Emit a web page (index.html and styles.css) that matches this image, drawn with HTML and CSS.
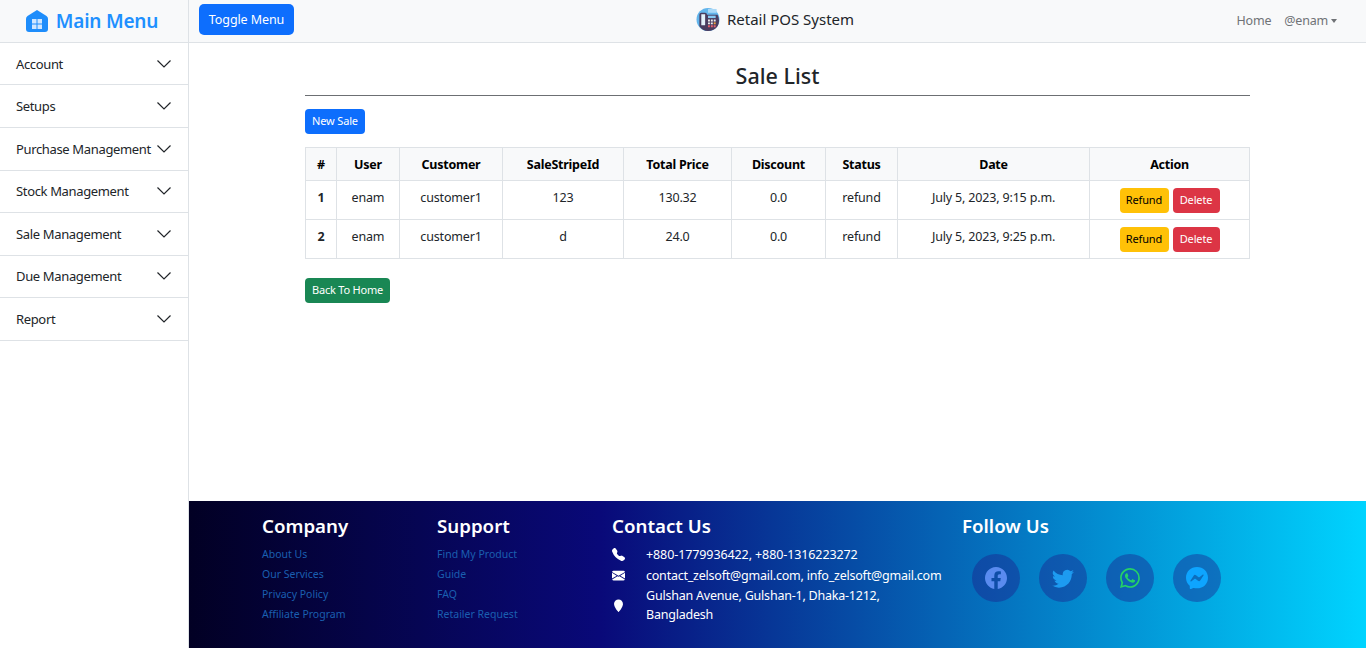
FILE: index.html
```html
<!DOCTYPE html>
<html>

	<head>
		<meta charset="UTF-8">
		<title>Sale List</title>
		<link rel="stylesheet" href="styles.css">
	</head>

	<body>
		<aside class="sidebar">
			<div class="brand">
				<svg class="brand-icon" viewBox="0 0 22 22">
					<path fill="#1e8dfb" d="M11 0 20.500 6Q22 7 22 9V19Q22 22 19 22H3Q0 22 0 19V9Q0 7 1.500 6Z" />
					<path fill="#cfe6ff" d="M6 9h4.500v4.500H6zM11.500 9H16v4.500h-4.500zM6 14.500h4.500V19H6zM11.500 14.500H16V19h-4.500z" />
				</svg>
				<span>Main Menu</span>
			</div>
			<ul class="menu">
				<li>Account<svg viewBox="0 0 16 16"><path d="M1.500 4.500 8 11l6.500-6.500" /></svg></li>
				<li>Setups<svg viewBox="0 0 16 16"><path d="M1.500 4.500 8 11l6.500-6.500" /></svg></li>
				<li>Purchase Management<svg viewBox="0 0 16 16"><path d="M1.500 4.500 8 11l6.500-6.500" /></svg></li>
				<li>Stock Management<svg viewBox="0 0 16 16"><path d="M1.500 4.500 8 11l6.500-6.500" /></svg></li>
				<li>Sale Management<svg viewBox="0 0 16 16"><path d="M1.500 4.500 8 11l6.500-6.500" /></svg></li>
				<li>Due Management<svg viewBox="0 0 16 16"><path d="M1.500 4.500 8 11l6.500-6.500" /></svg></li>
				<li>Report<svg viewBox="0 0 16 16"><path d="M1.500 4.500 8 11l6.500-6.500" /></svg></li>
			</ul>
		</aside>

		<div class="main">
			<nav class="navbar">
				<a class="btn btn-toggle" href="#">Toggle Menu</a>
				<div class="nav-title">
					<svg class="pos-icon" viewBox="0 0 24 24">
						<circle cx="12" cy="12" r="12" fill="#62b5ec" />
						<path fill="#a9d8f7" d="M12 1h9v4h-9z" />
						<path fill="#4a3d60" d="M3 19V7c0-1 1-2 2-2h4c1 0 2 1 2 2h11c2 4 2 9 0 12-2 3-6 5-10 5s-7-2-9-5z" />
						<path fill="#e3f1fb" d="M5 6.500h4V18H5z" />
						<path fill="#86c9f2" d="M12 8h8v2.500h-8z" />
						<path fill="#eeeeee" d="M12 12h2v2h-2zM15 12h2v2h-2zM18 12h2v2h-2zM12 15h2v2h-2zM15 15h2v2h-2z" />
						<path fill="#f0a23c" d="M18 15h2v2h-2z" />
						<path fill="#e4606d" d="M12 18h2v2h-2zM15 18h2v2h-2zM18 18h2v2h-2z" />
					</svg>
					<span>Retail POS System</span>
				</div>
				<div class="nav-links">
					<a href="#">Home</a>
					<a class="dropdown" href="#">@enam</a>
				</div>
			</nav>

			<div class="content">
				<h2>Sale List</h2>
				<div class="rule"></div>
				<a class="btn btn-sm btn-primary" href="#">New Sale</a>
				<table class="sale-table">
					<thead>
						<tr>
							<th>#</th>
							<th>User</th>
							<th>Customer</th>
							<th>SaleStripeId</th>
							<th>Total Price</th>
							<th>Discount</th>
							<th>Status</th>
							<th>Date</th>
							<th>Action</th>
						</tr>
					</thead>
					<tbody>
						<tr>
							<th>1</th>
							<td>enam</td>
							<td>customer1</td>
							<td>123</td>
							<td>130.32</td>
							<td>0.0</td>
							<td>refund</td>
							<td>July 5, 2023, 9:15 p.m.</td>
							<td class="actions"><a class="btn btn-sm btn-warning" href="#">Refund</a><a class="btn btn-sm btn-danger" href="#">Delete</a></td>
						</tr>
						<tr>
							<th>2</th>
							<td>enam</td>
							<td>customer1</td>
							<td>d</td>
							<td>24.0</td>
							<td>0.0</td>
							<td>refund</td>
							<td>July 5, 2023, 9:25 p.m.</td>
							<td class="actions"><a class="btn btn-sm btn-warning" href="#">Refund</a><a class="btn btn-sm btn-danger" href="#">Delete</a></td>
						</tr>
					</tbody>
				</table>
				<a class="btn btn-sm btn-success" href="#">Back To Home</a>
			</div>

			<footer class="footer">
				<div class="col">
					<h4>Company</h4>
					<ul>
						<li><a href="#">About Us</a></li>
						<li><a href="#">Our Services</a></li>
						<li><a href="#">Privacy Policy</a></li>
						<li><a href="#">Affiliate Program</a></li>
					</ul>
				</div>
				<div class="col">
					<h4>Support</h4>
					<ul>
						<li><a href="#">Find My Product</a></li>
						<li><a href="#">Guide</a></li>
						<li><a href="#">FAQ</a></li>
						<li><a href="#">Retailer Request</a></li>
					</ul>
				</div>
				<div class="col col-wide">
					<h4>Contact Us</h4>
					<div class="contact contact-phone">
						<svg viewBox="0 0 16 16"><path d="M1.885.511a1.745 1.745 0 0 1 2.61.163L6.290 2.980c.329.423.445.974.315 1.494l-.547 2.190a.678.678 0 0 0 .178.643l2.457 2.457a.678.678 0 0 0 .644.178l2.189-.547a1.745 1.745 0 0 1 1.494.315l2.306 1.794c.829.645.905 1.870.163 2.611l-1.034 1.034c-.74.74-1.846 1.065-2.877.702a18.634 18.634 0 0 1-7.010-4.420 18.634 18.634 0 0 1-4.420-7.009c-.362-1.030-.037-2.137.703-2.877L1.885.511z" /></svg>
						<span>+880-1779936422, +880-1316223272</span>
					</div>
					<div class="contact">
						<svg viewBox="0 0 16 16"><path d="M.05 3.555A2 2 0 0 1 2 2h12a2 2 0 0 1 1.950 1.555L8 8.414.05 3.555zM0 4.697v7.104l5.803-3.558L0 4.697zM6.761 8.830l-6.570 4.027A2 2 0 0 0 2 14h12a2 2 0 0 0 1.808-1.144l-6.570-4.027L8 9.586l-1.239-.756zm3.436-.586L16 11.801V4.697l-5.803 3.547z" /></svg>
						<span>contact_zelsoft@gmail.com, info_zelsoft@gmail.com</span>
					</div>
					<div class="contact">
						<svg viewBox="0 0 16 16"><path d="M8 16s5.500-5.686 5.500-10a5.500 5.500 0 0 0-11 0c0 4.314 5.500 10 5.500 10z" /></svg>
						<span>Gulshan Avenue, Gulshan-1, Dhaka-1212,<br>Bangladesh</span>
					</div>
				</div>
				<div class="col col-wide">
					<h4>Follow Us</h4>
					<div class="social">
						<a href="#"><svg class="fb" viewBox="0 0 16 16"><path d="M16 8.049c0-4.446-3.582-8.050-8-8.050C3.580 0-.002 3.603-.002 8.050c0 4.017 2.926 7.347 6.750 7.951v-5.625h-2.030V8.050H6.750V6.275c0-2.017 1.195-3.131 3.022-3.131.876 0 1.791.157 1.791.157v1.980h-1.009c-.993 0-1.303.621-1.303 1.258v1.510h2.218l-.354 2.326H9.250V16c3.824-.604 6.750-3.934 6.750-7.951z" /></svg></a>
						<a href="#"><svg class="tw" viewBox="0 0 16 16"><path d="M5.026 15c6.038 0 9.341-5.003 9.341-9.334 0-.14 0-.282-.006-.422A6.685 6.685 0 0 0 16 3.542a6.658 6.658 0 0 1-1.889.518 3.301 3.301 0 0 0 1.447-1.817 6.533 6.533 0 0 1-2.087.793A3.286 3.286 0 0 0 7.875 6.030a9.325 9.325 0 0 1-6.767-3.429 3.289 3.289 0 0 0 1.018 4.382A3.323 3.323 0 0 1 .64 6.575v.045a3.288 3.288 0 0 0 2.632 3.218 3.203 3.203 0 0 1-.865.115 3.230 3.230 0 0 1-.614-.057 3.283 3.283 0 0 0 3.067 2.277A6.588 6.588 0 0 1 .78 13.580a6.320 6.320 0 0 1-.78-.045A9.344 9.344 0 0 0 5.026 15z" /></svg></a>
						<a href="#"><svg class="wa" viewBox="0 0 16 16"><path d="M13.601 2.326A7.854 7.854 0 0 0 7.994 0C3.627 0 .068 3.558.064 7.926c0 1.399.366 2.760 1.057 3.965L0 16l4.204-1.102a7.933 7.933 0 0 0 3.790.965h.004c4.368 0 7.926-3.558 7.930-7.930A7.898 7.898 0 0 0 13.600 2.326zM7.994 14.521a6.573 6.573 0 0 1-3.356-.920l-.24-.144-2.494.654.666-2.433-.156-.251a6.560 6.560 0 0 1-1.007-3.505c0-3.626 2.957-6.584 6.591-6.584a6.560 6.560 0 0 1 4.660 1.931 6.557 6.557 0 0 1 1.928 4.660c-.004 3.639-2.961 6.592-6.592 6.592zm3.615-4.934c-.197-.099-1.170-.578-1.353-.646-.182-.065-.315-.099-.445.099-.133.197-.513.646-.627.775-.114.133-.232.148-.43.050-.197-.1-.836-.308-1.592-.985-.59-.525-.985-1.175-1.103-1.372-.114-.198-.011-.304.088-.403.087-.088.197-.232.296-.346.1-.114.133-.198.198-.33.065-.134.034-.248-.015-.347-.05-.099-.445-1.076-.612-1.470-.16-.389-.323-.335-.445-.34-.114-.007-.247-.007-.38-.007a.729.729 0 0 0-.529.247c-.182.198-.691.677-.691 1.654 0 .977.71 1.916.81 2.049.098.133 1.394 2.132 3.383 2.992.47.205.84.326 1.129.418.475.152.904.129 1.246.08.38-.058 1.171-.48 1.338-.943.164-.464.164-.86.114-.943-.049-.084-.182-.133-.38-.232z" /></svg></a>
						<a href="#"><svg class="ms" viewBox="0 0 16 16"><path d="M0 7.760C0 3.301 3.493 0 8 0s8 3.301 8 7.760-3.493 7.760-8 7.760c-.81 0-1.586-.107-2.316-.307a.639.639 0 0 0-.427.030l-1.588.702a.64.64 0 0 1-.898-.566l-.044-1.423a.639.639 0 0 0-.215-.456C.956 12.108 0 10.092 0 7.760zm5.546-1.459-2.350 3.728c-.225.358.214.761.551.506l2.525-1.916a.48.48 0 0 1 .578-.002l1.869 1.402a1.200 1.200 0 0 0 1.735-.32l2.350-3.728c.226-.358-.214-.761-.551-.506L9.728 7.381a.48.48 0 0 1-.578.002L7.281 5.980a1.200 1.200 0 0 0-1.735.32z" /></svg></a>
					</div>
				</div>
			</footer>
		</div>
	</body>

</html>
```

FILE: styles.css
```css
* {
	margin: 0;
	padding: 0;
	box-sizing: border-box;
}

body {
	display: flex;
	height: 100vh;
	overflow: hidden;
	font-family: "Noto Sans", "Open Sans", sans-serif;
	font-size: 13px;
	color: #212529;
	background: #fff;
}

a {
	text-decoration: none;
}

ul {
	list-style: none;
}

/* sidebar */
.sidebar {
	width: 189px;
	flex-shrink: 0;
	border-right: 1px solid #dee2e6;
}

.brand {
	display: flex;
	align-items: center;
	justify-content: center;
	gap: 8px;
	height: 42.900px;
	padding-right: 4px;
	background: #f8f9fa;
	border-bottom: 1px solid #dee2e6;
	color: #1e90ff;
	font-size: 19px;
	font-weight: 600;
	letter-spacing: -0.2px;
}

.brand-icon {
	width: 22px;
	height: 22px;
}

.menu li {
	display: flex;
	align-items: center;
	justify-content: space-between;
	height: 42.550px;
	padding: 0 16px;
	border-bottom: 1px solid #dee2e6;
	letter-spacing: -0.35px;
	white-space: nowrap;
}

.menu svg {
	width: 16px;
	height: 16px;
	flex-shrink: 0;
	fill: none;
	stroke: #212529;
	stroke-width: 1.200;
}

/* top bar */
.main {
	flex: 1;
	min-width: 0;
	display: flex;
	flex-direction: column;
}

.navbar {
	display: grid;
	grid-template-columns: 1fr auto 1fr;
	align-items: center;
	height: 43px;
	padding: 0 10px 3px;
	background: #f8f9fa;
	border-bottom: 1px solid #dee2e6;
}

.nav-title {
	display: flex;
	align-items: center;
	gap: 7px;
	margin-right: 5px;
	margin-bottom: 1px;
	font-size: 15px;
}

.pos-icon {
	width: 24px;
	height: 23px;
}

.nav-links {
	display: flex;
	justify-content: flex-end;
	gap: 13px;
	margin: 2px 19px 0 0;
	font-size: 12.500px;
	letter-spacing: -0.2px;
}

.nav-links a {
	color: #6f7276;
}

.dropdown::after {
	content: "";
	display: inline-block;
	margin-left: 3px;
	vertical-align: 2px;
	border-top: 4px solid #6f7276;
	border-left: 3.500px solid transparent;
	border-right: 3.500px solid transparent;
}

/* buttons */
.btn {
	display: inline-block;
	border-radius: 4px;
	color: #fff;
	text-align: center;
}

.btn-toggle {
	width: 95px;
	height: 31px;
	line-height: 31px;
	font-size: 12.500px;
	letter-spacing: -0.1px;
	border-radius: 5px;
	background: #0d6efd;
}

.btn-sm {
	height: 25px;
	line-height: 24px;
	font-size: 11px;
	padding: 0 7px;
	letter-spacing: -0.15px;
}

.btn-primary {
	background: #0d6efd;
}

.btn-success {
	background: #198754;
	letter-spacing: -0.2px;
}

.btn-warning {
	background: #ffc107;
	color: #000;
}

.btn-danger {
	background: #dc3545;
}

/* page body */
.content {
	flex: 1;
	padding: 0 116px;
}

.content h2 {
	margin-top: 19px;
	height: 33px;
	line-height: 28px;
	font-size: 21.500px;
	font-weight: 500;
	text-align: center;
}

.rule {
	height: 1px;
	margin-bottom: 13px;
	background: #6c6f73;
}

.sale-table {
	width: 945px;
	margin: 13px 0 19px;
	border-collapse: collapse;
	table-layout: fixed;
	font-size: 12.500px;
}

.sale-table th,
.sale-table td {
	border: 1px solid #dee2e6;
	text-align: center;
	vertical-align: middle;
	letter-spacing: -0.17px;
}

.sale-table th {
	color: #000;
	font-weight: 700;
	letter-spacing: -0.25px;
}

.sale-table thead tr {
	height: 33px;
	background: #f8f9fa;
}

.sale-table tbody tr {
	height: 39px;
}

.sale-table tbody th {
	color: #212529;
}

.sale-table td,
.sale-table tbody th {
	padding-bottom: 6px;
}

.sale-table th:nth-child(1) { width: 31px; }
.sale-table th:nth-child(2) { width: 63px; }
.sale-table th:nth-child(3) { width: 103px; }
.sale-table th:nth-child(4) { width: 121px; }
.sale-table th:nth-child(5) { width: 108px; }
.sale-table th:nth-child(6) { width: 94px; }
.sale-table th:nth-child(7) { width: 72px; }
.sale-table th:nth-child(8) { width: 192px; }

.sale-table .actions {
	padding: 0;
}

.actions .btn {
	margin: 0 2px;
	vertical-align: middle;
}

.actions .btn-warning {
	width: 49px;
	padding: 0;
}

.actions .btn-danger {
	width: 47px;
	padding: 0;
}

/* footer */
.footer {
	display: flex;
	height: 147px;
	padding: 12px 0 0 73px;
	color: #fff;
	background: linear-gradient(90deg, #020024 0%, #090979 35%, #00d4ff 100%);
}

.col {
	width: 175px;
}

.col-wide {
	width: 350px;
}

.col h4 {
	height: 26px;
	line-height: 26px;
	font-size: 18.700px;
	font-weight: 600;
	margin-bottom: 5px;
}

.col li {
	height: 20px;
	line-height: 20px;
	font-size: 10.500px;
}

.col li a {
	color: #1a5fb0;
}

.contact {
	display: flex;
	align-items: center;
	gap: 21px;
	min-height: 20px;
	margin-bottom: 1px;
	font-size: 12.500px;
	line-height: 19px;
	letter-spacing: -0.22px;
	white-space: nowrap;
}

.contact-phone {
	margin-top: 1px;
	letter-spacing: -0.1px;
}

.contact svg {
	width: 13px;
	height: 13px;
	flex-shrink: 0;
	fill: #fff;
}

.social {
	display: flex;
	gap: 19px;
	margin: 15px 0 0 10px;
}

.social a {
	display: flex;
	align-items: center;
	justify-content: center;
	width: 48px;
	height: 48px;
	border-radius: 50%;
	background: rgba(31, 25, 135, 0.4);
}

.social svg {
	width: 22px;
	height: 22px;
}

.social .fb {
	fill: #5a8bef;
}

.social .tw {
	fill: #1d9bf0;
}

.social .wa {
	width: 20px;
	height: 20px;
	fill: #25d366;
}

.social .ms {
	fill: #0ea5ff;
}
```
